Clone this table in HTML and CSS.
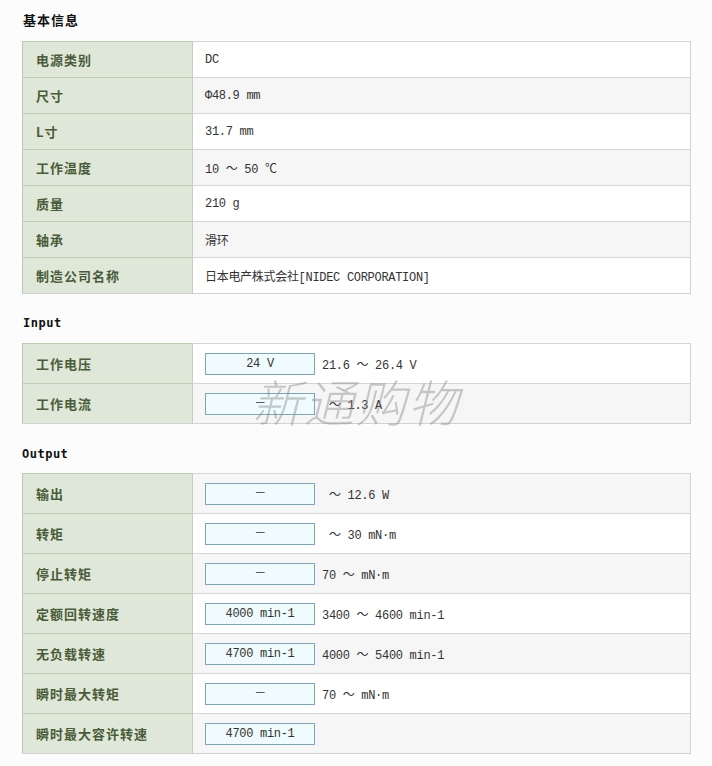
FILE: index.html
```html
<!DOCTYPE html>
<html lang="zh">
<head>
<meta charset="utf-8">
<title>基本信息</title>
<link rel="stylesheet" href="styles.css">
</head>
<body>
<div class="page">
  <h2 class="title title-first">基本信息</h2>
  <table class="spec spec-basic">
    <tr><th>电源类别</th><td>DC</td></tr>
    <tr class="alt"><th>尺寸</th><td>Φ48.9 mm</td></tr>
    <tr><th>L寸</th><td>31.7 mm</td></tr>
    <tr class="alt"><th>工作温度</th><td>10 ～ 50 ℃</td></tr>
    <tr><th>质量</th><td>210 g</td></tr>
    <tr class="alt"><th>轴承</th><td>滑环</td></tr>
    <tr><th>制造公司名称</th><td>日本电产株式会社[NIDEC CORPORATION]</td></tr>
  </table>

  <h2 class="title title-en">Input</h2>
  <table class="spec spec-io">
    <tr><th>工作电压</th><td><span class="box">24 V</span><span class="range">21.6 ～ 26.4 V</span></td></tr>
    <tr class="alt"><th>工作电流</th><td><span class="box">－</span><span class="range"> ～ 1.3 A</span></td></tr>
  </table>

  <h2 class="title title-en title-out">Output</h2>
  <table class="spec spec-io">
    <tr class="alt"><th>输出</th><td><span class="box">－</span><span class="range"> ～ 12.6 W</span></td></tr>
    <tr><th>转矩</th><td><span class="box">－</span><span class="range"> ～ 30 mN·m</span></td></tr>
    <tr class="alt"><th>停止转矩</th><td><span class="box">－</span><span class="range">70 ～ mN·m</span></td></tr>
    <tr><th>定额回转速度</th><td><span class="box">4000 min-1</span><span class="range">3400 ～ 4600 min-1</span></td></tr>
    <tr class="alt"><th>无负载转速</th><td><span class="box">4700 min-1</span><span class="range">4000 ～ 5400 min-1</span></td></tr>
    <tr><th>瞬时最大转矩</th><td><span class="box">－</span><span class="range">70 ～ mN·m</span></td></tr>
    <tr class="alt"><th>瞬时最大容许转速</th><td><span class="box">4700 min-1</span></td></tr>
  </table>

  <div class="watermark">新通购物</div>
</div>
</body>
</html>
```

FILE: styles.css
```css
html, body {
  margin: 0;
  padding: 0;
  background: #fcfcfc;
}

.page {
  position: relative;
  padding: 0 21px 0 22px;
  width: 669px;
}

.title {
  margin: 0;
  font-family: "Noto Sans CJK SC", sans-serif;
  font-weight: bold;
  color: #111;
}

.title-first {
  height: 41px;
  line-height: 40px;
  font-size: 13px;
  letter-spacing: 1px;
  padding-left: 1px;
  box-sizing: border-box;
}

.title-en {
  height: 49px;
  padding-top: 20px;
  line-height: 18px;
  box-sizing: border-box;
  font-family: "DejaVu Sans Mono", "Liberation Mono", monospace;
  font-size: 12px;
  letter-spacing: 0.5px;
  padding-left: 1px;
}

.title-out {
  height: 49px;
  padding-top: 21px;
  padding-left: 0;
}

.spec {
  width: 669px;
  border-collapse: collapse;
  table-layout: fixed;
  border: 1px solid #d2d2d2;
  border-left-color: #b9c8b1;
}

.spec th {
  width: 170px;
  box-sizing: border-box;
  background: #dfe8d8;
  color: #4a5b3a;
  font-family: "Noto Sans CJK SC", sans-serif;
  font-size: 13px;
  font-weight: bold;
  letter-spacing: 1px;
  text-align: left;
  padding: 0 0 0 13px;
  border-top: 1px solid #bccbb4;
  border-right: 1px solid #c3d0bc;
}

.spec td {
  background: #ffffff;
  color: #333;
  font-family: "Liberation Mono", "Noto Sans CJK SC", monospace;
  font-size: 12px;
  letter-spacing: -0.3px;
  padding: 0 0 0 12px;
  border-top: 1px solid #d6d6d6;
  white-space: pre;
}

.spec tr.alt td {
  background: #f6f6f6;
}

.spec-basic tr {
  height: 36px;
}

.spec-io tr {
  height: 40px;
}

.box {
  display: inline-block;
  vertical-align: middle;
  width: 110px;
  height: 22px;
  line-height: 20px;
  box-sizing: border-box;
  border: 1px solid #7fa7b1;
  background: #effbfd;
  text-align: center;
  margin-right: 7px;
}

.range {
  vertical-align: middle;
}

.watermark {
  position: absolute;
  left: 252px;
  top: 370px;
  font-family: "Noto Sans CJK SC", sans-serif;
  font-weight: 300;
  font-style: italic;
  font-size: 50px;
  line-height: 60px;
  letter-spacing: 2px;
  color: rgba(140, 140, 140, 0.45);
  pointer-events: none;
}
```
